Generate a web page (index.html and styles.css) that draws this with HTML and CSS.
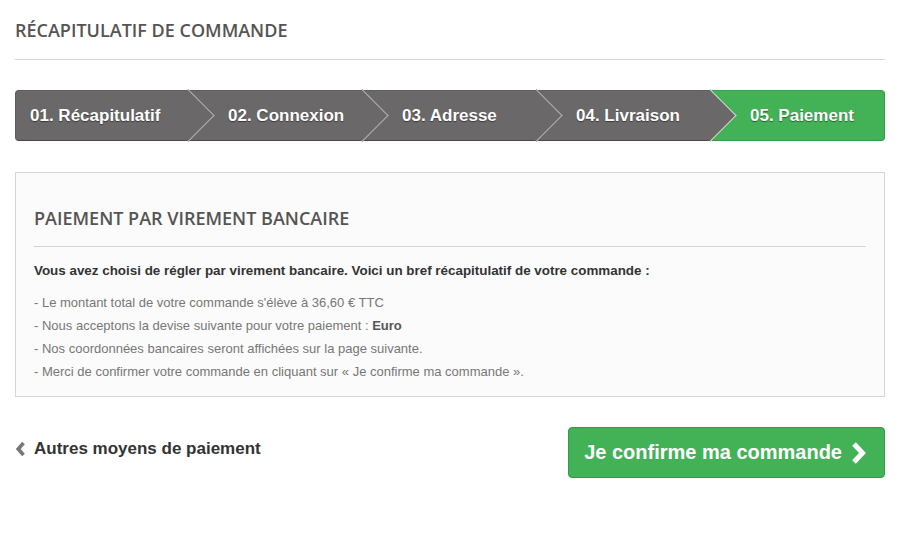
FILE: index.html
```html
<!DOCTYPE html>
<html lang="fr">
<head>
<meta charset="utf-8">
<title>Récapitulatif de commande</title>
<link rel="stylesheet" href="styles.css">
</head>
<body>
<div class="page">
  <h1 class="page-heading">Récapitulatif de commande</h1>

  <ul class="steps">
    <li class="step"><span>01. Récapitulatif</span></li>
    <li class="step"><span>02. Connexion</span></li>
    <li class="step"><span>03. Adresse</span></li>
    <li class="step"><span>04. Livraison</span></li>
    <li class="step step-current"><span>05. Paiement</span></li>
  </ul>

  <div class="box">
    <h3 class="box-title">Paiement par virement bancaire</h3>
    <p class="intro">Vous avez choisi de régler par virement bancaire. Voici un bref récapitulatif de votre commande :</p>
    <ul class="details">
      <li>- Le montant total de votre commande s'élève à 36,60 € TTC</li>
      <li>- Nous acceptons la devise suivante pour votre paiement : <b>Euro</b></li>
      <li>- Nos coordonnées bancaires seront affichées sur la page suivante.</li>
      <li>- Merci de confirmer votre commande en cliquant sur « Je confirme ma commande ».</li>
    </ul>
  </div>

  <div class="actions">
    <a class="back-link" href="#">
      <svg class="back-icon" width="11" height="16" viewBox="0 0 11 16"><polyline points="8.5,2 3.2,8 8.5,14" fill="none" stroke="#777" stroke-width="3.6" stroke-linejoin="miter"/></svg>
      <span>Autres moyens de paiement</span>
    </a>
    <a class="confirm-btn" href="#">
      <span>Je confirme ma commande</span>
      <svg class="next-icon" width="17" height="24" viewBox="0 0 17 24"><polyline points="4,3 12.5,12 4,21" fill="none" stroke="#fff" stroke-width="5" stroke-linejoin="miter"/></svg>
    </a>
  </div>
</div>
</body>
</html>
```

FILE: styles.css
```css
* { box-sizing: border-box; }

body {
  margin: 0;
  background: #fff;
  font-family: Arial, "Liberation Sans", Helvetica, sans-serif;
  color: #777;
}

.page {
  width: 870px;
  margin-left: 15px;
}

.page-heading {
  margin: 19px 0 30px;
  padding-bottom: 17px;
  border-bottom: 1px solid #d6d4d4;
  font-family: "Open Sans", sans-serif;
  font-weight: 600;
  font-size: 18px;
  line-height: 23px;
  color: #555454;
  text-transform: uppercase;
}

.steps {
  list-style: none;
  margin: 0;
  padding: 0;
  display: flex;
  height: 51px;
}

.step {
  position: relative;
  flex: none;
  width: 20%;
  display: flex;
  align-items: center;
  background: #6a6868;
  border-top: 1px solid #5f5d5d;
  border-bottom: 1px solid #4a4949;
  font-family: Arial, "Liberation Sans", sans-serif;
  font-weight: bold;
  font-size: 17px;
  color: #fff;
  text-shadow: 0 1px 1px rgba(0,0,0,0.45);
  padding-left: 39px;
}

.step:first-child {
  padding-left: 14px;
  border-radius: 4px 0 0 4px;
  border-left: 1px solid #5f5d5d;
}

.step span { position: relative; z-index: 3; }

.step:not(:last-child)::after {
  content: "";
  position: absolute;
  z-index: 2;
  top: 6px;
  right: -18px;
  width: 36px;
  height: 36px;
  background: #6a6868;
  border-top: 1px solid #b3b1b1;
  border-right: 1px solid #b3b1b1;
  transform: rotate(45deg);
}

.step:nth-child(4)::after {
  border-color: #c9e6cd;
}

.step-current {
  background: #43b155;
  border-top-color: #3ca34d;
  border-bottom-color: #36984a;
  border-right: 1px solid #36984a;
  border-radius: 0 4px 4px 0;
}

.box {
  margin-top: 31px;
  background: #fbfbfb;
  border: 1px solid #d6d4d4;
  padding: 35px 18px 13px;
}

.box-title {
  margin: 0 0 15px;
  padding-bottom: 18px;
  border-bottom: 1px solid #d6d4d4;
  font-family: "Open Sans", sans-serif;
  font-weight: 600;
  font-size: 18px;
  line-height: 20px;
  color: #555454;
  text-transform: uppercase;
}

.intro {
  margin: 0 0 11px;
  font-weight: bold;
  font-size: 13.4px;
  line-height: 18px;
  color: #333;
}

.details {
  list-style: none;
  margin: 0;
  padding: 0;
  font-size: 13px;
  line-height: 23px;
  color: #777;
}

.details b { color: #555; }

.actions {
  margin-top: 30px;
  display: flex;
  justify-content: space-between;
  align-items: flex-start;
}

.back-link {
  display: flex;
  align-items: center;
  gap: 8px;
  margin-top: 10px;
  font-weight: bold;
  font-size: 17px;
  line-height: 24px;
  color: #333;
  text-decoration: none;
}

.back-icon { display: block; }

.confirm-btn {
  display: flex;
  align-items: center;
  gap: 8px;
  height: 51px;
  padding: 0 17px 0 15px;
  background: #43b155;
  border: 1px solid #36984a;
  border-radius: 4px;
  font-weight: bold;
  font-size: 20px;
  color: #fff;
  text-decoration: none;
}

.next-icon { display: block; }
```
